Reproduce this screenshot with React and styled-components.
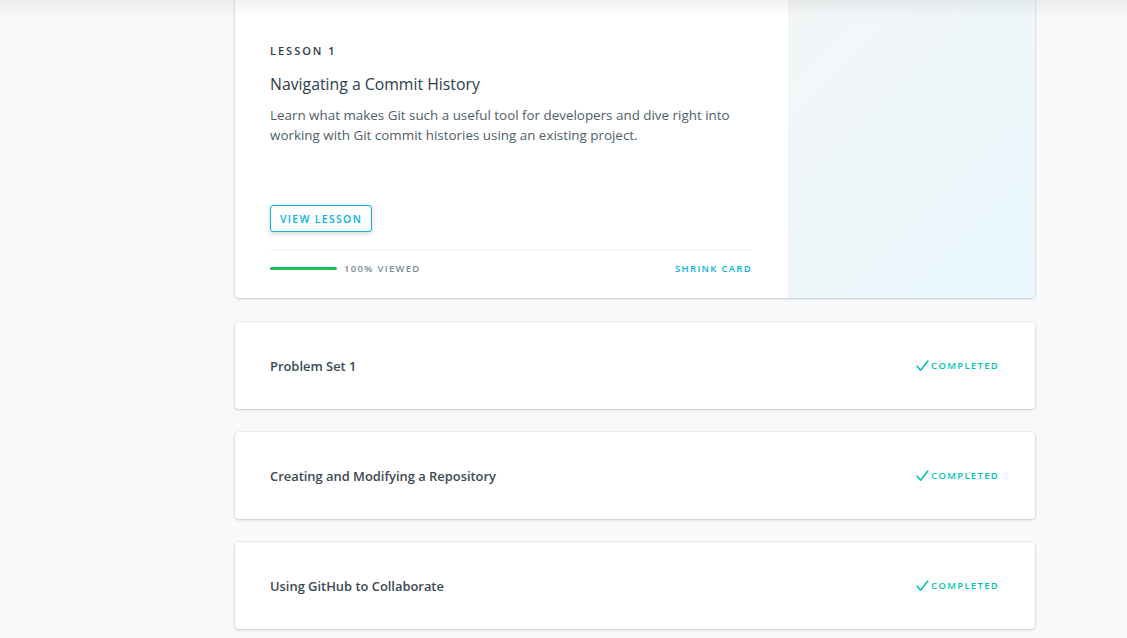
import styled, { createGlobalStyle } from "styled-components"

const Global = createGlobalStyle`
    html, body {
        margin: 0;
        padding: 0;
        background: #f7f9fb;
        font-family: "Open Sans", "Liberation Sans", sans-serif;
        color: #2e3d49;
        overflow: hidden;
    }
`
const HeaderShadow = styled.div`
    position: fixed;
    top: 0;
    left: 0;
    right: 0;
    height: 18px;
    background: linear-gradient(to bottom, rgba(0, 0, 0, 0.05), rgba(0, 0, 0, 0));
    pointer-events: none;
`
const Page = styled.div`
    width: 800px;
    margin-left: 235px;
    display: flex;
    flex-direction: column;
    gap: 23px;
    padding-bottom: 8px;
`
const Card = styled.div`
    background: #fff;
    border-radius: ${props => (props.open ? "0 0 4px 4px" : "4px")};
    margin-bottom: ${props => (props.open ? "1px" : "0")};
    box-shadow: 0 0 0 1px rgba(0, 0, 0, 0.04), 0 1px 3px rgba(0, 0, 0, 0.16);
    display: flex;
    overflow: hidden;
`
const Main = styled.div`
    flex: 1;
    padding: 44px 36px 0 35px;
    display: flex;
    flex-direction: column;
`
const Side = styled.div`
    width: 247px;
    flex-shrink: 0;
    background: linear-gradient(135deg, #f4f6f7 0%, #eef7fa 50%, #e8f8fe 100%);
`
const Label = styled.div`
    font-size: 11px;
    font-weight: 600;
    letter-spacing: 2px;
    line-height: 14px;
`
const Title = styled.h2`
    margin: 15px 0 0;
    font-size: 15.8px;
    font-weight: 400;
    line-height: 22px;
    color: #2e3d49;
`
const Text = styled.p`
    margin: 10px 0 0;
    font-size: 13.4px;
    line-height: 20px;
    color: #4f5e69;
    width: 475px;
`
const Button = styled.button`
    align-self: flex-start;
    margin-top: 60px;
    height: 27px;
    padding: 0 9px;
    border: 1px solid #02b3e4;
    border-radius: 3px;
    background: #fff;
    color: #02b3e4;
    font-family: inherit;
    font-size: 10.5px;
    font-weight: 600;
    letter-spacing: 1.3px;
    box-shadow: 0 2px 5px rgba(0, 0, 0, 0.16);
`
const Footer = styled.div`
    margin-top: 18px;
    border-top: 1px solid #eef0f2;
    height: 48px;
    padding-top: 11px;
    box-sizing: border-box;
    display: flex;
    align-items: flex-start;
    justify-content: space-between;
`
const Progress = styled.div`
    display: flex;
    align-items: center;
    gap: 7px;
`
const Bar = styled.div`
    width: 67px;
    height: 3px;
    border-radius: 2px;
    background: #1fbe5b;
`
const Small = styled.span`
    font-size: 9.5px;
    font-weight: 600;
    letter-spacing: 1.3px;
    color: ${props => props.color || "#7d8a94"};
`
const Row = styled.div`
    flex: 1;
    height: 87px;
    padding: 0 36px 0 35px;
    display: flex;
    align-items: center;
    justify-content: space-between;
`
const RowTitle = styled.div`
    font-size: 12.9px;
    font-weight: 600;
    color: #3a4954;
`
const Done = styled.div`
    display: flex;
    align-items: center;
    gap: 2px;
`

function Check() {
    return (
        <svg width="13" height="12" viewBox="0 0 13 12" fill="none">
            <path d="M1.2 6.2 L4.6 10.2 L11.8 1" stroke="#02c4b4" strokeWidth="1.6" strokeLinecap="round" strokeLinejoin="round" />
        </svg>
    )
}

const items = ["Problem Set 1", "Creating and Modifying a Repository", "Using GitHub to Collaborate"]

export default function App() {
    return (
        <>
            <Global />
            <Page>
                <Card open>
                    <Main>
                        <Label>LESSON 1</Label>
                        <Title>Navigating a Commit History</Title>
                        <Text>
                            Learn what makes Git such a useful tool for developers and dive right into working with Git commit histories using an existing project.
                        </Text>
                        <Button>VIEW LESSON</Button>
                        <Footer>
                            <Progress>
                                <Bar />
                                <Small>100% VIEWED</Small>
                            </Progress>
                            <Small color="#02b3e4">SHRINK CARD</Small>
                        </Footer>
                    </Main>
                    <Side />
                </Card>
                {items.map(item => (
                    <Card key={item}>
                        <Row>
                            <RowTitle>{item}</RowTitle>
                            <Done>
                                <Check />
                                <Small color="#02c4b4">COMPLETED</Small>
                            </Done>
                        </Row>
                    </Card>
                ))}
            </Page>
            <HeaderShadow />
        </>
    )
}
